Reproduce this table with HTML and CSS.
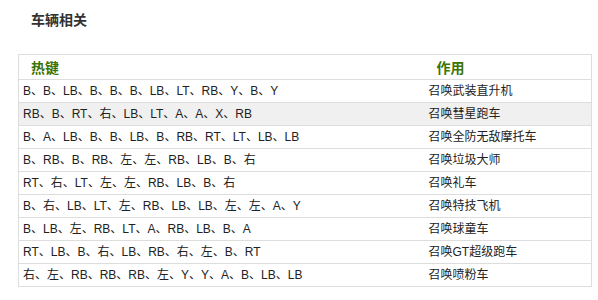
FILE: index.html
```html
<!DOCTYPE html>
<html lang="zh-CN">
<head>
<meta charset="utf-8">
<link rel="stylesheet" href="styles.css">
</head>
<body>
<div class="page">
  <h3 class="title">车辆相关</h3>
  <table class="keys">
    <colgroup><col class="c1"><col class="c2"></colgroup>
    <thead>
      <tr><th>热键</th><th>作用</th></tr>
    </thead>
    <tbody>
      <tr><td>B、B、LB、B、B、B、LB、LT、RB、Y、B、Y</td><td>召唤武装直升机</td></tr>
      <tr class="hover"><td>RB、B、RT、右、LB、LT、A、A、X、RB</td><td>召唤彗星跑车</td></tr>
      <tr><td>B、A、LB、B、B、LB、B、RB、RT、LT、LB、LB</td><td>召唤全防无敌摩托车</td></tr>
      <tr><td>B、RB、B、RB、左、左、RB、LB、B、右</td><td>召唤垃圾大师</td></tr>
      <tr><td>RT、右、LT、左、左、RB、LB、B、右</td><td>召唤礼车</td></tr>
      <tr><td>B、右、LB、LT、左、RB、LB、LB、左、左、A、Y</td><td>召唤特技飞机</td></tr>
      <tr><td>B、LB、左、RB、LT、A、RB、LB、B、A</td><td>召唤球童车</td></tr>
      <tr><td>RT、LB、B、右、LB、RB、右、左、B、RT</td><td>召唤GT超级跑车</td></tr>
      <tr><td>右、左、RB、RB、RB、左、Y、Y、A、B、LB、LB</td><td>召唤喷粉车</td></tr>
    </tbody>
  </table>
</div>
</body>
</html>
```

FILE: styles.css
```css
html, body {
  margin: 0;
  padding: 0;
  background: #fff;
}
.page {
  padding: 10px 0 0 18px;
  font-family: "Liberation Sans", Arial, "Noto Sans CJK SC", sans-serif;
  color: #222;
}
.title {
  margin: 0 0 24px 13px;
  font-size: 14px;
  line-height: 20px;
  font-weight: bold;
  color: #333;
}
.keys {
  border-collapse: collapse;
  table-layout: fixed;
  width: 573px;
  border: 1px solid #ddd;
  font-size: 12px;
}
.c1 { width: 406px; }
.c2 { width: 167px; }
.keys th {
  height: 24px;
  padding: 0 12px;
  text-align: left;
  font-size: 14px;
  font-weight: bold;
  color: #3d7300;
  border-bottom: 1px solid #ddd;
}
.keys td {
  height: 22px;
  line-height: 22px;
  padding: 0 4px;
  border-bottom: 1px solid #ddd;
  white-space: nowrap;
  color: #222;
}
.keys tr.hover td {
  background: #f0f0f0;
}
```
